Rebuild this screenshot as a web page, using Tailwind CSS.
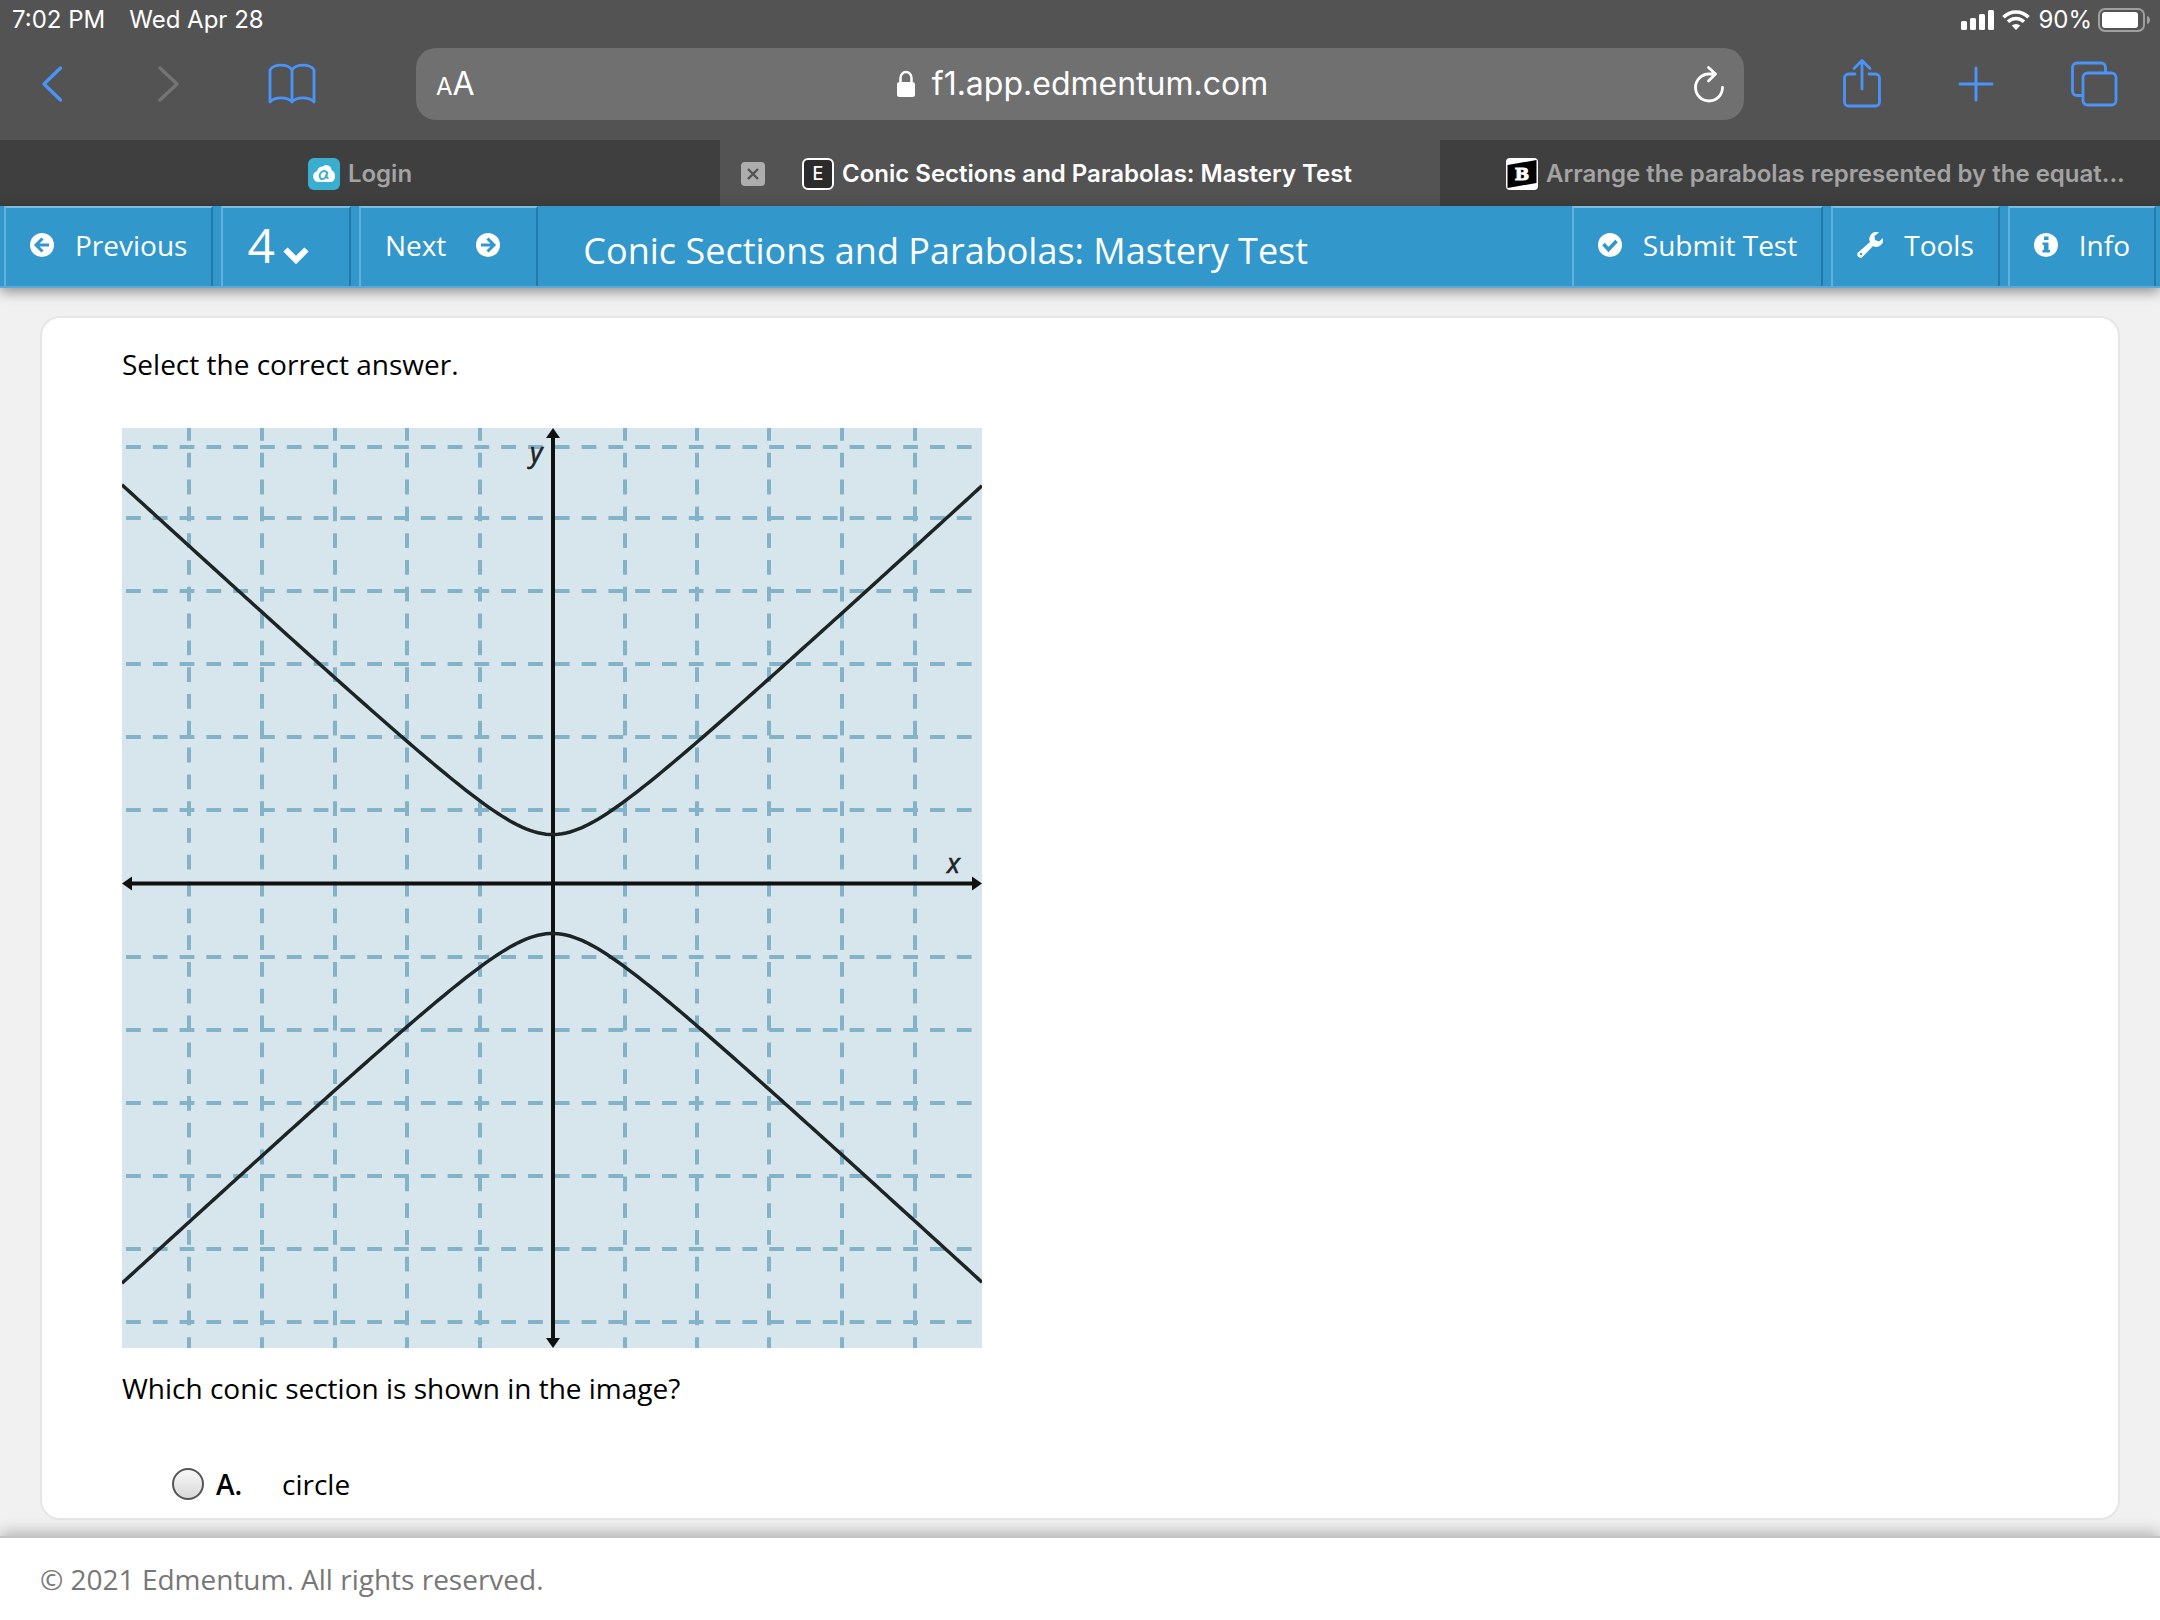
<!DOCTYPE html>
<html lang="en">
<head>
    <meta charset="UTF-8">
    <meta name="viewport" content="width=device-width, initial-scale=1.0">
    <title>Conic Sections and Parabolas: Mastery Test</title>
    <script src="https://cdn.jsdelivr.net/npm/@tailwindcss/browser@4"></script>
</head>
<body class="min-h-screen flex flex-col bg-[#f1f1f1] font-['Open_Sans',sans-serif] text-black">

    <!-- Browser chrome -->
    <div class="bg-[#535353] text-white font-[Inter,sans-serif]">
        <div class="h-10 pl-3 pr-[10px] flex items-center justify-between text-2xl">
            <div class="flex gap-6">
                <span>7:02 PM</span>
                <span>Wed Apr 28</span>
            </div>
            <div class="flex items-center gap-[6px]">
                <svg class="w-[33px] h-5" viewBox="0 0 33 20" fill="#fff">
                    <rect x="0" y="11" width="6" height="9" rx="1.5"/>
                    <rect x="9" y="8" width="6" height="12" rx="1.5"/>
                    <rect x="18" y="4" width="6" height="16" rx="1.5"/>
                    <rect x="27" y="0" width="6" height="20" rx="1.5"/>
                </svg>
                <svg class="w-7 h-5 mx-[2px]" viewBox="0 0 28 20" fill="none" stroke="#fff" stroke-width="3.6">
                    <path d="M1.500 7.200a17.600 17.600 0 0 1 25 0"/>
                    <path d="M6 11.800a11.300 11.300 0 0 1 16 0"/>
                    <path d="M14 20l-4.200-4.400a6 6 0 0 1 8.400 0z" fill="#fff" stroke="none"/>
                </svg>
                <span>90%</span>
                <svg class="w-[52px] h-6" viewBox="0 0 52 24">
                    <rect x="1" y="1" width="45" height="22" rx="6" fill="none" stroke="#a0a0a0" stroke-width="2"/>
                    <rect x="4" y="4" width="36" height="16" rx="3" fill="#fff"/>
                    <path d="M49 8c4 1 4 7 0 8z" fill="#a0a0a0"/>
                </svg>
            </div>
        </div>

        <div class="h-[100px] pt-2 flex items-start">
            <div class="w-[416px] h-[72px] pl-10 flex items-center text-[#4a93f8]">
                <button type="button" aria-label="Back" class="w-[116px]">
                    <svg class="w-6 h-10" viewBox="0 0 24 40" fill="none" stroke="currentColor" stroke-width="3.4" stroke-linecap="round" stroke-linejoin="round"><path d="M20.500 4L4 20l16.500 16"/></svg>
                </button>
                <button type="button" aria-label="Forward" class="w-[112px] text-[#747474]">
                    <svg class="w-6 h-10" viewBox="0 0 24 40" fill="none" stroke="currentColor" stroke-width="3.4" stroke-linecap="round" stroke-linejoin="round"><path d="M4 4l17 16L4 36"/></svg>
                </button>
                <button type="button" aria-label="Bookmarks">
                    <svg class="w-12 h-11" viewBox="0 0 48 44" fill="none" stroke="currentColor" stroke-width="2.8" stroke-linejoin="round">
                        <path d="M24 8C20 1.500 6 1.500 2 8v32c4-5.500 18-5.500 22 0 4-5.500 18-5.500 22 0V8C42 1.500 28 1.500 24 8zM24 8v32"/>
                    </svg>
                </button>
            </div>

            <div class="flex-1 h-[72px] px-5 flex items-center rounded-[20px] bg-[#707070]">
                <button type="button" aria-label="Text size" class="w-16 pt-1 text-left leading-10"><span class="text-2xl">A</span><span class="text-[32px]">A</span></button>
                <div class="flex-1 pl-1 flex items-center justify-center gap-4">
                    <svg class="w-5 h-7" viewBox="0 0 20 28"><path d="M4.500 13V8a5.500 6 0 0 1 11 0v5" fill="none" stroke="#fff" stroke-width="2.5"/><rect x="1" y="12" width="18" height="15" rx="2.5" fill="#fff"/></svg>
                    <span class="text-[32px] leading-10">f1.app.edmentum.com</span>
                </div>
                <button type="button" aria-label="Reload" class="w-16 flex justify-end">
                    <svg class="w-8 h-10" viewBox="0 0 32 40" fill="none" stroke="#fff" stroke-width="2.8" stroke-linecap="round" stroke-linejoin="round">
                        <path d="M30.500 23.500A13.500 13.500 0 1 1 17 10h6.500M16.500 3.500l7 6.500-7 7"/>
                    </svg>
                </button>
            </div>

            <div class="w-[416px] h-[72px] pl-[98px] pr-[42px] flex items-center justify-between text-[#4a93f8]">
                <button type="button" aria-label="Share">
                    <svg class="w-10 h-[52px]" viewBox="0 0 40 52" fill="none" stroke="currentColor" stroke-width="2.8" stroke-linecap="round" stroke-linejoin="round">
                        <path d="M13 16H6.500a4 4 0 0 0-4 4v24a4 4 0 0 0 4 4h27a4 4 0 0 0 4-4V20a4 4 0 0 0-4-4H27M20 31V3M12 10.500L20 2.500l8 8"/>
                    </svg>
                </button>
                <button type="button" aria-label="New tab">
                    <svg class="w-9 h-9" viewBox="0 0 36 36" fill="none" stroke="currentColor" stroke-width="3" stroke-linecap="round"><path d="M18 2v32M2 18h32"/></svg>
                </button>
                <button type="button" aria-label="Show tabs">
                    <svg class="w-12 h-[46px]" viewBox="0 0 48 46" fill="none" stroke="currentColor" stroke-width="2.8">
                        <path d="M12.500 34.500H7a4.500 4.500 0 0 1-4.500-4.500V6.500A4.500 4.500 0 0 1 7 2h24a4.500 4.500 0 0 1 4.500 4.500V12"/>
                        <rect x="13" y="12" width="33" height="32" rx="4.5"/>
                    </svg>
                </button>
            </div>
        </div>

        <div class="h-[66px] grid grid-cols-3 text-2xl font-semibold text-[#a3a3a3]">
            <div class="pt-[2px] flex items-center justify-center gap-2 bg-[#3f3f3f]">
                <svg class="w-8 h-8 rounded-md" viewBox="0 0 32 32">
                    <rect width="32" height="32" fill="#39aecf"/>
                    <path d="M10 24a5.500 5.500 0 0 1-1-10.700 6 6 0 0 1 6-4.800 5 5 0 0 1 8.500 3.500A7 7 0 0 1 27 18c0 4-2 6-5 6z" fill="#fff"/>
                    <path d="M18.500 14c-4-3-8 2-6.500 5.500 1.500 3 5 1.500 6-1.500l1.500-4.500c-1 4-1.500 7 1 6.500" fill="none" stroke="#39aecf" stroke-width="1.8"/>
                </svg>
                <a href="#">Login</a>
            </div>
            <div class="pt-[2px] pl-[21px] pr-20 flex items-center text-white">
                <button type="button" aria-label="Close tab" class="mr-[37px]">
                    <svg class="w-6 h-6" viewBox="0 0 24 24"><rect width="24" height="24" rx="4" fill="#adadad"/><path d="M7 7l10 10M17 7L7 17" stroke="#535353" stroke-width="2.4"/></svg>
                </button>
                <span class="w-8 h-8 mr-2 flex items-center justify-center rounded-md border-2 border-white bg-[#2b2b2b] text-lg font-medium">E</span>
                <a href="#" class="whitespace-nowrap">Conic Sections and Parabolas: Mastery Test</a>
            </div>
            <div class="pt-[2px] pl-[66px] pr-6 flex items-center gap-2 bg-[#3f3f3f]">
                <svg class="w-8 h-8 shrink-0" viewBox="0 0 32 32">
                    <rect width="32" height="32" rx="4" fill="#fff"/>
                    <path d="M1.500 7L30.500 2v23L1.500 30z" fill="#000"/>
                    <text x="16" y="22" text-anchor="middle" font-family="DejaVu Serif, serif" font-size="17" font-weight="700" fill="#fff" stroke="#fff">B</text>
                </svg>
                <a href="#" class="whitespace-nowrap">Arrange the parabolas represented by the equat...</a>
            </div>
        </div>
    </div>

    <!-- Test toolbar -->
    <header class="relative px-1 flex gap-2 bg-[#3298cc] border-b-2 border-[#5aa9d6] text-white text-[28px] leading-10 shadow-[0_4px_12px_rgba(0,0,0,0.4)]">
        <button type="button" class="h-20 px-6 pb-1 flex items-center gap-[21px] border-2 border-b-0 border-t-[#7bbde0] border-l-[#63b1da] border-r-[#2379a7]">
            <svg class="w-6 h-6" viewBox="0 0 24 24"><circle cx="12" cy="12" r="12" fill="#fff"/><path d="M12.500 5.500L6 12l6.500 6.500M6.500 12H19" fill="none" stroke="#3298cc" stroke-width="3"/></svg>
            Previous
        </button>
        <button type="button" aria-label="Question 4" class="h-20 pl-6 pr-10 pb-1 flex items-center gap-2 border-2 border-b-0 border-t-[#7bbde0] border-l-[#63b1da] border-r-[#2379a7]">
            <span class="text-5xl">4</span>
            <svg class="w-[26px] h-[18px] mt-5" viewBox="0 0 26 18"><path d="M2.500 3.500L13 14 23.500 3.500" fill="none" stroke="#fff" stroke-width="6"/></svg>
        </button>
        <button type="button" class="h-20 pl-6 pr-9 pb-1 flex items-center gap-[30px] border-2 border-b-0 border-t-[#7bbde0] border-l-[#63b1da] border-r-[#2379a7]">
            Next
            <svg class="w-6 h-6" viewBox="0 0 24 24"><circle cx="12" cy="12" r="12" fill="#fff"/><path d="M11.500 5.500L18 12l-6.500 6.500M17.500 12H5" fill="none" stroke="#3298cc" stroke-width="3"/></svg>
        </button>
        <h1 class="flex-1 h-20 pl-[37px] pt-[10px] flex items-center text-4xl whitespace-nowrap">Conic Sections and Parabolas: Mastery Test</h1>
        <button type="button" class="h-20 px-6 pb-1 flex items-center gap-[21px] border-2 border-b-0 border-t-[#7bbde0] border-l-[#63b1da] border-r-[#2379a7]">
            <svg class="w-6 h-6" viewBox="0 0 24 24"><circle cx="12" cy="12" r="12" fill="#fff"/><path d="M5.500 11l5 5.500 8-8.500" fill="none" stroke="#3298cc" stroke-width="3.6"/></svg>
            Submit Test
        </button>
        <button type="button" class="h-20 px-6 pb-1 flex items-center gap-[21px] border-2 border-b-0 border-t-[#7bbde0] border-l-[#63b1da] border-r-[#2379a7]">
            <svg class="w-[26px] h-[26px]" viewBox="0 0 26 26"><path d="M1 20.500L13 10a7 7 0 0 1 9-9.500l-4.500 3.500.5 4 4 1.500L26 6a7 7 0 0 1-10 8L5.500 25a3.200 3.200 0 0 1-4.500-4.500z" fill="#fff"/><circle cx="4" cy="22" r="1.2" fill="#3298cc"/></svg>
            Tools
        </button>
        <button type="button" class="h-20 px-6 pb-1 flex items-center gap-[21px] border-2 border-b-0 border-t-[#7bbde0] border-l-[#63b1da] border-r-[#2379a7]">
            <svg class="w-6 h-6" viewBox="0 0 24 24"><circle cx="12" cy="12" r="12" fill="#fff"/><path d="M10 3.500h4.500V7H10zM8.500 9.500h6V17H16v2.500H8.500V17H10v-5H8.500z" fill="#3298cc"/></svg>
            Info
        </button>
    </header>

    <!-- Question -->
    <main class="flex-1 mx-10 mt-7 mb-4 pl-20 pt-[26px] rounded-[20px] border-2 border-[#e6e6e6] bg-white text-[28px] leading-10">
        <p>Select the correct answer.</p>
        <svg class="w-[860px] h-[920px] mt-11" viewBox="0 0 860 920" role="img" aria-label="Hyperbola opening up and down">
            <rect width="860" height="920" fill="#d7e6ed"/>
            <g id="grid" stroke="#84b3c8" stroke-width="4"></g>
            <g stroke="#111" stroke-width="4">
                <path d="M431 4v912M4 455.500h852"/>
                <path d="M431 0l7 10h-14zM431 920l7-10h-14zM0 455.500l10-7v14zM860 455.500l-10-7v14z" fill="#111" stroke="none"/>
            </g>
            <path id="curve" fill="none" stroke="#1d2426" stroke-width="3.5"/>
            <g font-family="Open Sans" font-style="italic" font-size="27" fill="#1d2426" stroke="#1d2426" stroke-width="0.6">
                <text x="408" y="34">y</text>
                <text x="825" y="445">x</text>
            </g>
        </svg>
        <p class="mt-5">Which conic section is shown in the image?</p>
        <div class="mt-14 pl-[50px] flex items-center">
            <input type="radio" id="answerA" name="answer" class="appearance-none w-8 h-8 mr-3 rounded-full border-2 border-[#555] bg-linear-to-b from-[#f8f8f8] to-[#d8d8d8]">
            <label for="answerA" class="flex"><span class="w-[66px] font-semibold">A.</span>circle</label>
        </div>
    </main>

    <footer class="relative h-[84px] px-10 flex items-center bg-white border-t-2 border-[#c4c4c4] text-[28px] leading-10 text-[#777] shadow-[0_-4px_14px_rgba(0,0,0,0.25)]">
        © 2021 Edmentum. All rights reserved.
    </footer>

    <script>
        const svgNs = 'http://www.w3.org/2000/svg';
        const grid = document.getElementById('grid');

        function addLine(x1, y1, x2, y2, offset) {
            const line = document.createElementNS(svgNs, 'line');
            line.setAttribute('x1', x1);
            line.setAttribute('y1', y1);
            line.setAttribute('x2', x2);
            line.setAttribute('y2', y2);
            line.setAttribute('stroke-dasharray', '14.8 12');
            line.setAttribute('stroke-dashoffset', offset);
            grid.appendChild(line);
        }

        // 73px cells, skipping the two axes
        [67, 140, 213, 285, 358, 503, 575, 647, 720, 793].forEach(x => addLine(x, 0, x, 920, 2));
        [19, 90, 163, 236, 309, 382, 529, 602, 675, 748, 821, 894].forEach(y => addLine(4, y, 860, y, 0));

        // y^2/a^2 - x^2/b^2 = 1, centred on the axes
        const a = 49.5;
        const b = 53.8;
        let upper = '';
        let lower = '';
        for (let x = 0; x <= 860; x += 4) {
            const y = a * Math.sqrt(1 + Math.pow((x - 430.5) / b, 2));
            upper += (x ? 'L' : 'M') + x + ' ' + (456 - y).toFixed(2);
            lower += (x ? 'L' : 'M') + x + ' ' + (456 + y).toFixed(2);
        }
        document.getElementById('curve').setAttribute('d', upper + lower);
    </script>
</body>
</html>
